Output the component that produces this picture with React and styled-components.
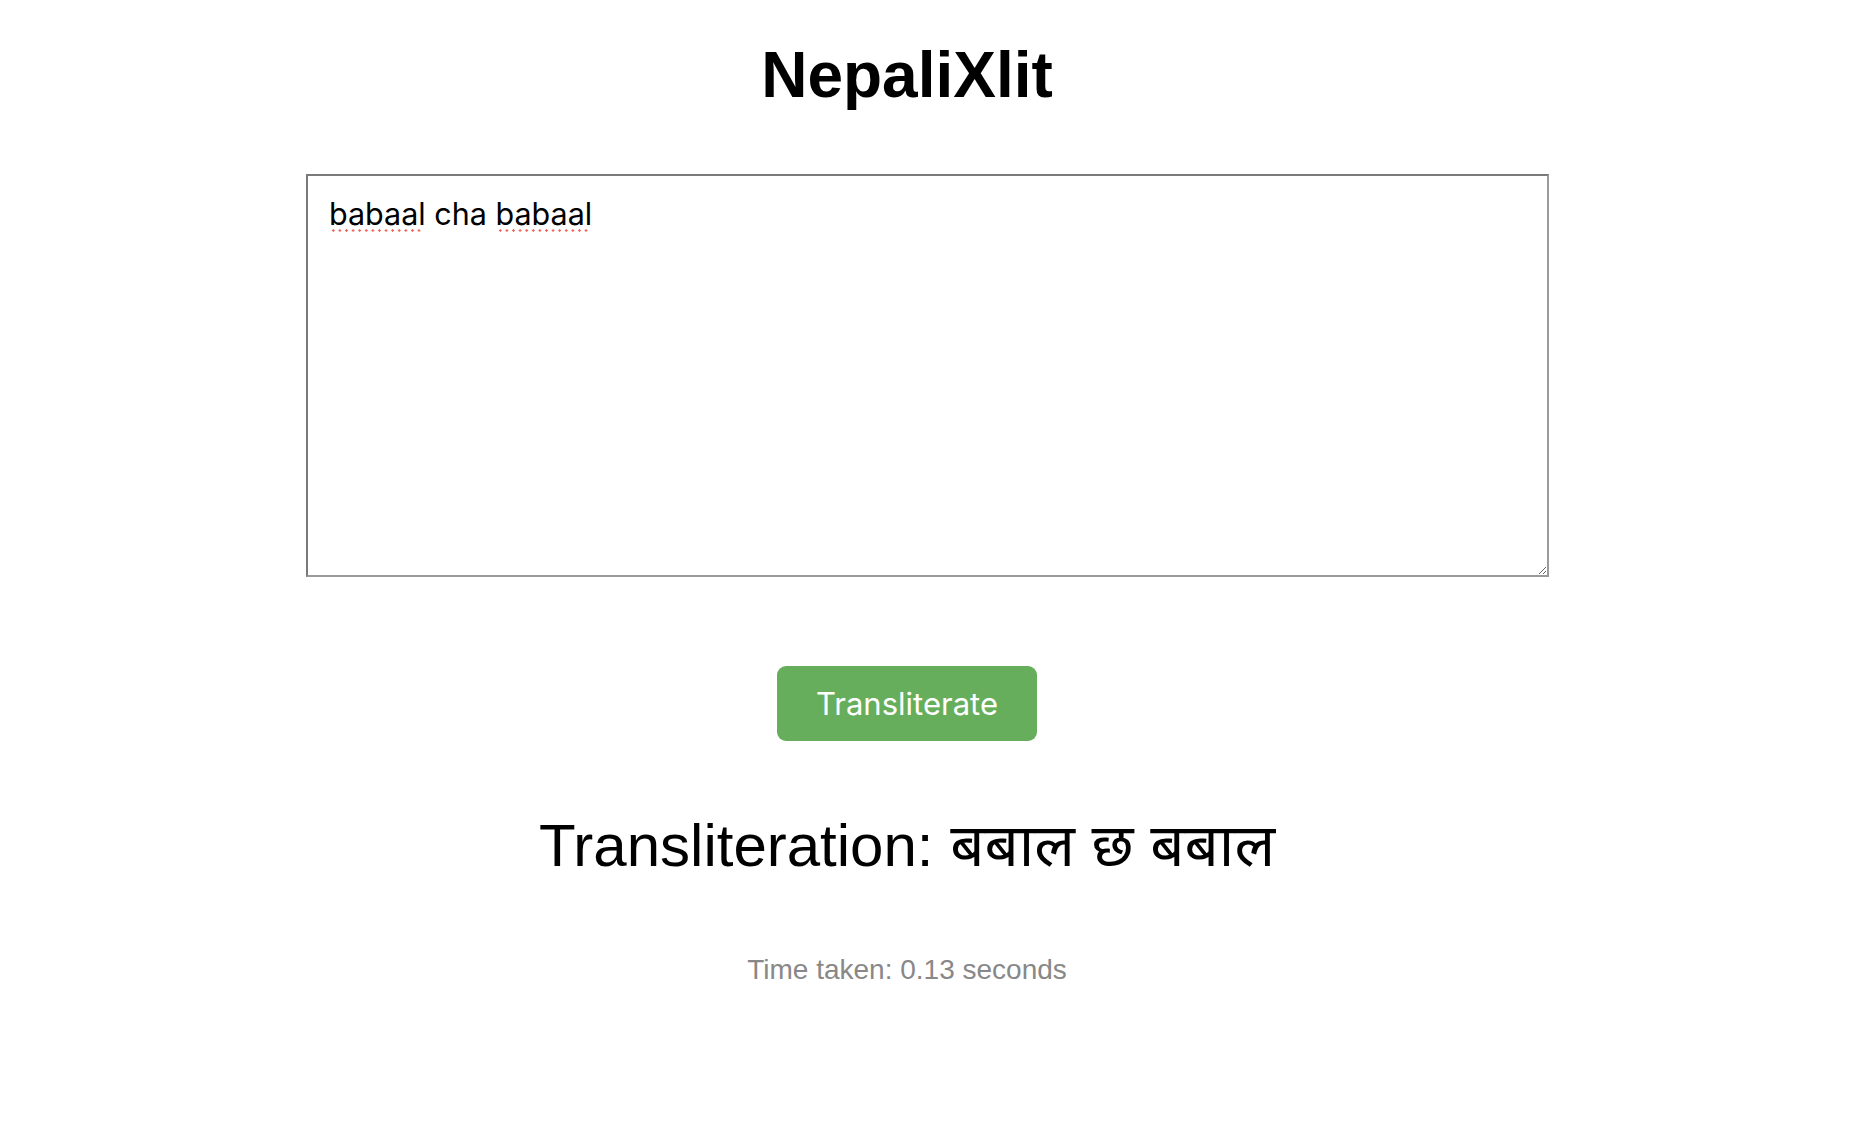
import React, { useState } from 'react';
import styled, { createGlobalStyle } from 'styled-components';

const GlobalStyle = createGlobalStyle`
  html, body {
    margin: 0;
    padding: 0;
    background: #ffffff;
  }
  body {
    font-family: 'Liberation Sans', Arial, sans-serif;
    color: #000;
  }
`;

const Page = styled.div`
  width: 1868px;
  min-height: 1138px;
  box-sizing: border-box;
  padding: 39px 360px 0 306px;
  display: flex;
  flex-direction: column;
  align-items: center;
`;

const Title = styled.h1`
  margin: 0;
  font-family: 'Liberation Sans', Arial, sans-serif;
  font-weight: 700;
  font-size: 64px;
  line-height: 72px;
`;

const Form = styled.form`
  align-self: stretch;
  margin-top: 63px;
  display: flex;
  flex-direction: column;
  align-items: center;
`;

const InputWrap = styled.div`
  align-self: stretch;
  position: relative;
`;

const TextInput = styled.textarea`
  display: block;
  width: 100%;
  height: 361px;
  box-sizing: content-box;
  margin: 0;
  padding: 19px 16px 19px 21px;
  border: 2px solid #7a7a7a;
  border-right-color: #9a9a9a;
  border-bottom-color: #9a9a9a;
  border-radius: 0;
  font-family: Inter, 'Noto Sans', sans-serif;
  font-size: 30.5px;
  color: #000;
  outline: none;
  resize: both;
`;

// spell-check squiggles drawn over the misspelled words
const Squiggle = styled.span`
  position: absolute;
  top: 55px;
  left: ${p => p.$left}px;
  width: ${p => p.$width}px;
  height: 3px;
  background-image: radial-gradient(circle, #f0645a 1.2px, transparent 1.4px);
  background-size: 6.6px 3px;
  background-repeat: repeat-x;
  pointer-events: none;
`;

const Button = styled.button`
  margin-top: 89px;
  width: 260px;
  height: 75px;
  border: none;
  border-radius: 9px;
  background-color: #67ae5c;
  color: #fff;
  font-family: Inter, 'Noto Sans', sans-serif;
  font-size: 31px;
  cursor: pointer;
  display: flex;
  align-items: center;
  justify-content: center;
`;

const Result = styled.h2`
  margin: 69px 0 0;
  font-family: 'Liberation Sans', Arial, 'Noto Sans Devanagari', 'Lohit Devanagari', sans-serif;
  font-weight: 400;
  font-size: 60px;
  line-height: 72px;
  white-space: nowrap;
`;

const Timing = styled.p`
  margin: 72px 0 0;
  font-family: 'Liberation Sans', Arial, sans-serif;
  font-size: 28px;
  line-height: 32px;
  color: #888888;
`;

export default function App() {
  const [text, setText] = useState('babaal cha babaal');

  return (
    <Page>
      <GlobalStyle />
      <Title>NepaliXlit</Title>
      <Form onSubmit={e => e.preventDefault()}>
        <InputWrap>
          <TextInput
            value={text}
            onChange={e => setText(e.target.value)}
            spellCheck={false}
          />
          <Squiggle $left={24} $width={93} />
          <Squiggle $left={191} $width={92} />
        </InputWrap>
        <Button type="submit">Transliterate</Button>
      </Form>
      <Result>Transliteration: बबाल छ बबाल</Result>
      <Timing>Time taken: 0.13 seconds</Timing>
    </Page>
  );
}
